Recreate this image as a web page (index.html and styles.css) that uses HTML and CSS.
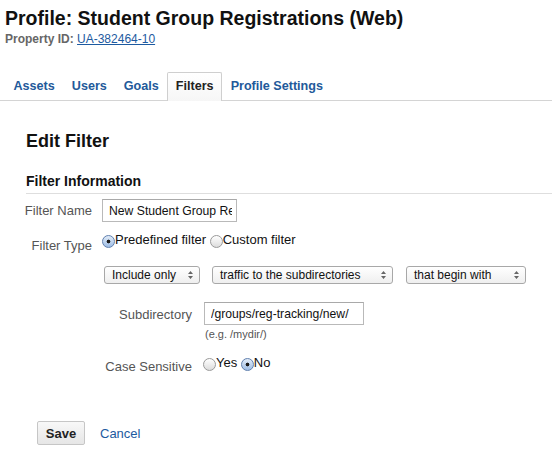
FILE: index.html
```html
<!DOCTYPE html>
<html>
<head>
<meta charset="utf-8">
<link rel="stylesheet" href="styles.css">
</head>
<body>
<header class="head">
  <h1 class="title">Profile: Student Group Registrations (Web)</h1>
  <div class="prop"><span class="prop-label">Property ID:</span> <a class="link" href="#">UA-382464-10</a></div>
</header>
<ul class="tabs">
  <li class="tab">Assets</li>
  <li class="tab">Users</li>
  <li class="tab">Goals</li>
  <li class="tab active">Filters</li>
  <li class="tab">Profile Settings</li>
</ul>
<main class="content">
  <h2 class="edit">Edit Filter</h2>
  <h3 class="section">Filter Information</h3>
  <div class="row row-name">
    <label class="label lbl-input">Filter Name</label>
    <input class="text name" type="text" value="New Student Group Registrations">
  </div>
  <div class="row row-type">
    <span class="label lbl-type">Filter Type</span>
    <span class="radios"><input class="radio" type="radio" name="ft" checked>Predefined filter <input class="radio" type="radio" name="ft">Custom filter</span>
  </div>
  <div class="selects">
    <div class="select s1"><span>Include only</span><svg class="arrow" width="5" height="8" viewBox="0 0 5 8"><path d="M0 3L2.5 0L5 3Z M0 5L2.5 8L5 5Z" fill="#666"/></svg></div>
    <div class="select s2"><span>traffic to the subdirectories</span><svg class="arrow" width="5" height="8" viewBox="0 0 5 8"><path d="M0 3L2.5 0L5 3Z M0 5L2.5 8L5 5Z" fill="#666"/></svg></div>
    <div class="select s3"><span>that begin with</span><svg class="arrow" width="5" height="8" viewBox="0 0 5 8"><path d="M0 3L2.5 0L5 3Z M0 5L2.5 8L5 5Z" fill="#666"/></svg></div>
  </div>
  <div class="sub">
    <div class="row row-subdir">
      <label class="label sublabel lbl-input2">Subdirectory</label>
      <div class="field">
        <input class="text subdir" type="text" value="/groups/reg-tracking/new/">
        <div class="hint">(e.g. /mydir/)</div>
      </div>
    </div>
    <div class="row row-case">
      <span class="label sublabel lbl-case">Case Sensitive</span>
      <span class="radios radios-case"><input class="radio" type="radio" name="cs">Yes <input class="radio" type="radio" name="cs" checked>No</span>
    </div>
  </div>
  <div class="actions">
    <button class="btn" type="button">Save</button>
    <a class="cancel" href="#">Cancel</a>
  </div>
</main>
</body>
</html>
```

FILE: styles.css
```css
html, body {
  margin: 0;
  padding: 0;
  background: #fff;
}
body {
  font-family: "Liberation Sans", Arial, sans-serif;
  color: #222;
  width: 552px;
  overflow: hidden;
}
.head {
  padding: 6px 0 0 5px;
}
.title {
  margin: 0;
  font-size: 19.5px;
  line-height: 24px;
  font-weight: bold;
  color: #111;
}
.prop {
  margin-top: 1px;
  font-size: 12px;
  line-height: 16px;
}
.prop-label {
  font-weight: bold;
  color: #666;
}
.link {
  color: #1d5aa0;
  text-decoration: underline;
}
.tabs {
  list-style: none;
  margin: 25px 0 0 0;
  padding: 0 0 0 5px;
  display: flex;
  align-items: flex-end;
  border-bottom: 1px solid #d4d4d4;
  height: 28px;
}
.tab {
  box-sizing: border-box;
  height: 29px;
  margin-bottom: -1px;
  padding: 0 7.5px;
  border: 1px solid transparent;
  border-bottom: 0;
  font-size: 12.6px;
  line-height: 27px;
  font-weight: bold;
  color: #22599a;
}
.tab.active {
  border-color: #cfcfcf;
  border-radius: 2px 2px 0 0;
  background: linear-gradient(#ffffff, #f6f6f6);
  color: #222;
}
.content {
  padding: 0;
}
.edit {
  margin: 29px 0 0 26px;
  font-size: 18px;
  line-height: 22px;
  font-weight: bold;
  color: #111;
}
.section {
  margin: 20px 0 0 26px;
  padding-bottom: 3px;
  font-size: 14px;
  line-height: 18px;
  font-weight: bold;
  color: #111;
  border-bottom: 1px solid #dedede;
}
.row {
  display: flex;
  align-items: flex-start;
}
.label {
  box-sizing: border-box;
  width: 92px;
  text-align: right;
  font-size: 13px;
  color: #555;
  flex: none;
}
.row-name {
  margin-top: 5px;
  gap: 10px;
}
.lbl-input {
  line-height: 23px;
}
.text {
  box-sizing: border-box;
  height: 23px;
  margin: 0;
  border: 1px solid #b9b9b9;
  border-top-color: #a9a9a9;
  padding: 0 4px 0 6px;
  font-family: "Liberation Sans", Arial, sans-serif;
  font-size: 12.2px;
  color: #111;
  background: #fff;
  outline: none;
}
.name {
  width: 135px;
}
.row-type {
  margin-top: 10px;
  gap: 10px;
}
.lbl-type {
  padding-top: 6px;
  line-height: 16px;
}
.radios {
  font-size: 13px;
  line-height: 16px;
  color: #111;
  white-space: nowrap;
}
.radio {
  -webkit-appearance: none;
  appearance: none;
  box-sizing: border-box;
  width: 13px;
  height: 13px;
  margin: 0;
  vertical-align: -4px;
  border: 1px solid #9a9a9a;
  border-radius: 50%;
  background: linear-gradient(#ffffff, #dcdcdc);
  position: relative;
}
.radio:checked {
  border-color: #5f7fae;
  background: radial-gradient(circle at 50% 50%, #1b1b1b 0, #1b1b1b 1.6px, transparent 2.2px), linear-gradient(#e2ecf8, #9ebde5);
}
.selects {
  display: flex;
  gap: 12px;
  margin: 12px 0 0 104px;
}
.select {
  box-sizing: border-box;
  height: 18px;
  display: flex;
  align-items: center;
  justify-content: space-between;
  padding: 0 6px 0 7px;
  border: 1px solid #a8a8a8;
  border-radius: 3px;
  background: linear-gradient(#ffffff, #efefef);
  font-size: 12px;
  line-height: 15px;
  color: #111;
}
.s1 { width: 96px; }
.s2 { width: 181px; }
.s3 { width: 120px; margin-left: 1px; }
.arrow {
  flex: none;
  display: block;
}
.sub {
  margin-left: 100px;
}
.row-subdir {
  margin-top: 18px;
  gap: 12px;
}
.lbl-input2 {
  line-height: 23px;
  padding-top: 1px;
}
.subdir {
  width: 160px;
}
.hint {
  margin-top: 2px;
  padding-left: 1px;
  font-size: 11px;
  line-height: 14px;
  color: #555;
}
.row-case {
  margin-top: 14px;
  gap: 11px;
}
.lbl-case {
  padding-top: 4px;
  line-height: 16px;
}
.actions {
  display: flex;
  align-items: center;
  gap: 15px;
  margin: 46px 0 0 37px;
}
.btn {
  box-sizing: border-box;
  height: 24px;
  width: 48px;
  padding: 0;
  border: 1px solid #c6c6c6;
  border-radius: 2px;
  background: linear-gradient(#f8f8f8, #e6e6e6);
  font-family: "Liberation Sans", Arial, sans-serif;
  font-size: 13px;
  font-weight: bold;
  color: #222;
}
.cancel {
  font-size: 13px;
  color: #1d5aa0;
  text-decoration: none;
}
```
